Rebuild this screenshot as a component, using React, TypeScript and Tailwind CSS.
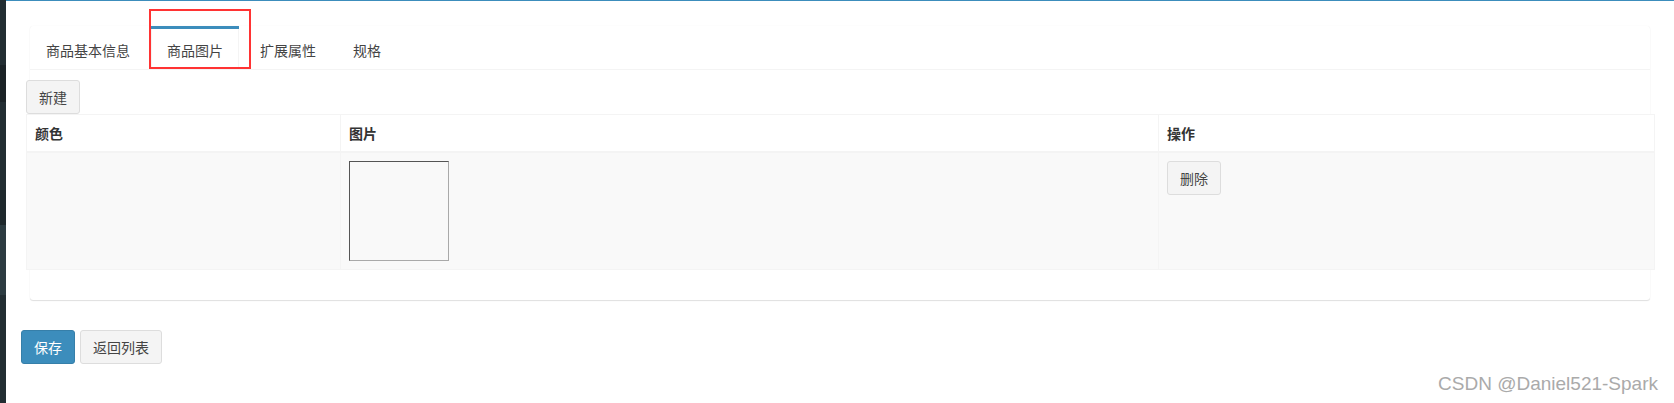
import React, { useState } from 'react';

const tabs = ['商品基本信息', '商品图片', '扩展属性', '规格'];

const cjk = { fontFamily: '"Noto Sans CJK SC", "Noto Sans", sans-serif' };

const App: React.FC = () => {
    const [activeTab, setActiveTab] = useState(1);

    return (
        <div className="relative flex min-h-[403px] w-full bg-white text-[14px] text-[#333]" style={cjk}>
            {/* sidebar edge */}
            <div className="flex w-[6px] shrink-0 flex-col">
                <div className="h-[65px] bg-[#222d32]" />
                <div className="h-[37px] bg-[#1a2226]" />
                <div className="h-[88px] bg-[#222d32]" />
                <div className="h-[35px] bg-[#1e282c]" />
                <div className="h-[70px] bg-[#2c3b41]" />
                <div className="flex-1 bg-[#222d32]" />
            </div>

            <div className="flex min-w-0 flex-1 flex-col border-t border-[#3c8dbc]">
                {/* tabs panel */}
                <div className="mx-[24px] mt-[25px] rounded-[3px] bg-white shadow-[0_1px_1px_rgba(0,0,0,0.12),0_0_1px_rgba(0,0,0,0.08)]">
                    <ul className="flex border-b border-[#f4f4f4]">
                        {tabs.map((t, i) => (
                            <li
                                key={t}
                                className={
                                    'mr-[5px] border-t-[3px] ' +
                                    (i === activeTab ? 'border-[#3c8dbc]' : 'border-transparent')
                                }
                            >
                                <button
                                    onClick={() => setActiveTab(i)}
                                    className={
                                        'block px-[15px] pb-[9px] pt-[11px] leading-[20px] text-[#444] border-x ' +
                                        (i === activeTab ? 'border-[#f4f4f4]' : 'border-transparent')
                                    }
                                >
                                    {t}
                                </button>
                            </li>
                        ))}
                    </ul>

                    <div className="-ml-[4px] -mr-[5px] pb-[30px] pt-[10px]">
                        <button className="block rounded-[3px] border border-[#ddd] bg-[#f4f4f4] px-[12px] py-[6px] leading-[20px] text-[#444]">
                            新建
                        </button>
                        <table className="w-full table-fixed border-collapse border border-[#f4f4f4]">
                            <colgroup>
                                <col className="w-[314px]" />
                                <col className="w-[818px]" />
                                <col />
                            </colgroup>
                            <thead>
                                <tr className="bg-white">
                                    <th className="border border-b-2 border-[#f4f4f4] p-[8px] text-left font-bold leading-[20px] text-[#333]">颜色</th>
                                    <th className="border border-b-2 border-[#f4f4f4] p-[8px] text-left font-bold leading-[20px] text-[#333]">图片</th>
                                    <th className="border border-b-2 border-[#f4f4f4] p-[8px] text-left font-bold leading-[20px] text-[#333]">操作</th>
                                </tr>
                            </thead>
                            <tbody>
                                <tr className="bg-[#f9f9f9]">
                                    <td className="border border-[#f4f4f4] p-[8px] align-top"></td>
                                    <td className="border border-[#f4f4f4] p-[8px] align-top">
                                        <div className="h-[100px] w-[100px] border border-b-[#a9a9a9] border-l-[#555] border-r-[#a9a9a9] border-t-[#555]" />
                                    </td>
                                    <td className="border border-[#f4f4f4] p-[8px] align-top">
                                        <button className="rounded-[3px] border border-[#ddd] bg-[#f4f4f4] px-[12px] py-[6px] leading-[20px] text-[#444]">
                                            删除
                                        </button>
                                    </td>
                                </tr>
                            </tbody>
                        </table>
                    </div>
                </div>

                <div className="ml-[15px] mt-[30px] flex gap-[5px]">
                    <button className="rounded-[3px] border border-[#367fa9] bg-[#3c8dbc] px-[12px] py-[6px] leading-[20px] text-white">
                        保存
                    </button>
                    <button className="rounded-[3px] border border-[#ddd] bg-[#f4f4f4] px-[12px] py-[6px] leading-[20px] text-[#444]">
                        返回列表
                    </button>
                </div>
            </div>

            {/* annotation box */}
            <div className="pointer-events-none absolute left-[149px] top-[9px] h-[60px] w-[102px] border-2 border-[#f33]" />

            {/* watermark */}
            <div
                className="pointer-events-none absolute right-[16px] top-[373px] text-[19px] leading-[22px] text-[#aaaaaa]"
                style={{ fontFamily: '"Liberation Sans", Arial, sans-serif' }}
            >
                CSDN @Daniel521-Spark
            </div>
        </div>
    );
};

export default App;
